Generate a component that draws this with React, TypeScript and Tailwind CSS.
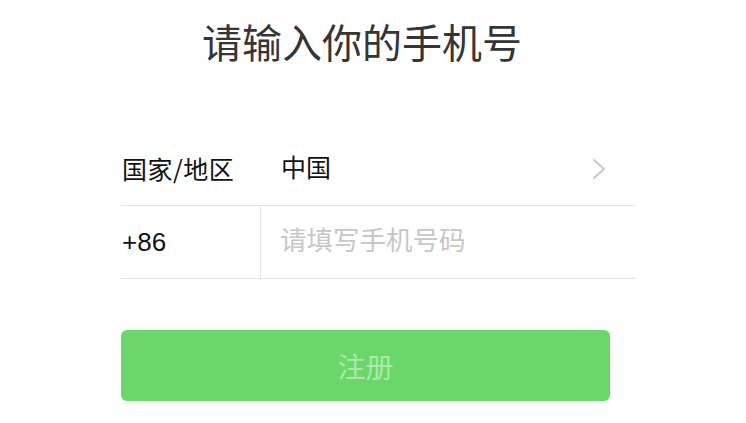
import React, { useState } from "react";

const cjk = "font-['Liberation_Sans','Noto_Sans_CJK_SC',sans-serif]";

const Chevron = () => (
  <svg width="14" height="22" viewBox="0 0 14 22" fill="none" className="mr-[30px] ml-auto">
    <polyline points="2,2 12,11 2,20" stroke="#c7c7cc" strokeWidth="2" strokeLinecap="round" strokeLinejoin="round" />
  </svg>
);

export default function App() {
  const [phone, setPhone] = useState("");

  return (
    <div className={`h-[423px] w-[746px] overflow-hidden bg-white ${cjk}`}>
      {/* title */}
      <div className="mt-[17px] h-[48px] pr-[22px] text-center font-['Noto_Sans_CJK_SC',sans-serif] text-[40px] leading-[48px] text-[#353535]">
        请输入你的手机号
      </div>

      <div className="mt-[67px] pl-[121px]">
        {/* country row */}
        <div className="flex h-[74px] w-[515px] items-center border-b border-[#e5e5e5] text-[25px] text-[#111]">
          <span className="w-[160px] pl-[1px] font-['Noto_Sans_CJK_SC',sans-serif] tracking-[0.5px]">国家/地区</span>
          <span>中国</span>
          <Chevron />
        </div>

        {/* phone row */}
        <div className="flex h-[73px] w-[515px] border-b border-[#e5e5e5]">
          <div className="flex w-[140px] items-center border-r border-[#e5e5e5] pl-[1px] text-[26px] text-[#111]">
            +86
          </div>
          <input
            value={phone}
            onChange={(e) => setPhone(e.target.value)}
            placeholder="请填写手机号码"
            className={`min-w-0 flex-1 bg-transparent pl-[19px] text-[26.5px] text-[#111] outline-none placeholder:text-[#c7c7c7] ${cjk}`}
          />
        </div>

        {/* submit */}
        <button
          disabled={!phone}
          className="mt-[51px] flex h-[71px] w-[489px] items-center justify-center rounded-[6px] bg-[#6bd76b] font-['Noto_Sans_CJK_SC',sans-serif] text-[28px] text-[#a9eaa9]"
        >
          注册
        </button>
      </div>
    </div>
  );
}
